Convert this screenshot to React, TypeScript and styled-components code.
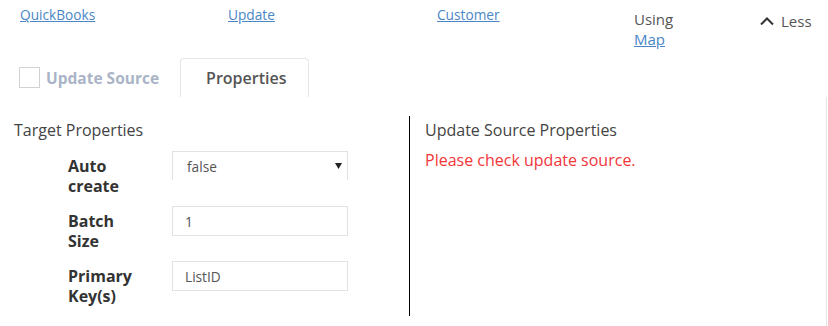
import styled, { createGlobalStyle } from "styled-components";

const GlobalStyle = createGlobalStyle`
  body {
    margin: 0;
    background: #fff;
    font-family: "Open Sans", "Liberation Sans", sans-serif;
  }
`;

const Header = styled.div`
  display: grid;
  grid-template-columns: 208px 209px 197px 126px 1fr;
  height: 58px;
  padding-left: 20px;
  box-sizing: border-box;
`;

const NavLink = styled.a`
  font-size: 13.7px;
  line-height: 18px;
  padding-top: 6px;
  color: #4a86c6;
  text-decoration: underline;
  align-self: start;
  justify-self: start;
`;

const Using = styled.div`
  font-size: 15px;
  line-height: 20px;
  padding-top: 9px;
  color: #555;

  & > a {
    display: block;
    color: #4a86c6;
    text-decoration: underline;
  }
`;

const LessToggle = styled.div`
  display: flex;
  align-items: center;
  gap: 7px;
  height: 20px;
  margin-top: 11px;
  font-size: 15px;
  color: #555;

  & > svg {
    width: 14px;
    height: 8px;
  }
`;

const TabRow = styled.div`
  display: flex;
  align-items: center;
  height: 39px;
  padding-left: 19px;
`;

const CheckBox = styled.span`
  width: 19px;
  height: 19px;
  border: 1px solid #d2d2d2;
  margin-right: 6px;
`;

const SourceLabel = styled.span`
  font-size: 15.5px;
  font-weight: 700;
  color: #aab4c6;
  margin-right: 21px;
`;

const Tab = styled.div`
  align-self: stretch;
  display: flex;
  align-items: center;
  padding: 0 21px 0 25px;
  border: 1px solid #e6e6e6;
  border-bottom: none;
  border-radius: 4px 4px 0 0;
  font-size: 16px;
  font-weight: 600;
  color: #555;
`;

const Panel = styled.div`
  display: grid;
  grid-template-columns: 410px 1fr;
  align-items: start;
  width: 827px;
  padding: 19px 0 10px;
  border-right: 1px solid #e6e6e6;
  box-sizing: border-box;
`;

const Column = styled.div<{ $divider?: boolean }>`
  padding: 4px 0 9px ${(p) => (p.$divider ? "14px" : "15px")};
  border-right: ${(p) => (p.$divider ? "1px solid #000" : "none")};
  height: ${(p) => (p.$divider ? "200px" : "auto")};
  box-sizing: border-box;
`;

const Heading = styled.div`
  font-size: 16px;
  line-height: 20px;
  color: #444;
`;

const ErrorText = styled.div`
  margin-top: 10px;
  font-size: 16px;
  line-height: 20px;
  color: #f2353a;
`;

const Fields = styled.div`
  display: grid;
  row-gap: 9px;
  margin-top: 11px;
  padding-left: 54px;
`;

const FieldRow = styled.div`
  display: grid;
  grid-template-columns: 104px 176px;
  height: 46px;
`;

const FieldLabel = styled.div`
  padding-top: 5px;
  font-size: 16px;
  line-height: 20px;
  font-weight: 700;
  color: #333;
`;

const TextBox = styled.div`
  height: 30px;
  box-sizing: border-box;
  border: 1px solid #e2e2e2;
  padding-left: 12px;
  display: flex;
  align-items: center;
  font-size: 13.7px;
  color: #555;
`;

const SelectBox = styled(TextBox)`
  height: 29px;
  border-bottom: none;
  padding: 0 5px 0 14px;
  justify-content: space-between;

  & > svg {
    width: 7px;
    height: 6px;
  }
`;

const fields = [
  { label: ["Auto", "create"], value: "false", select: true },
  { label: ["Batch", "Size"], value: "1" },
  { label: ["Primary", "Key(s)"], value: "ListID" },
];

export default function App() {
  return (
    <>
      <GlobalStyle />
      <Header>
        <NavLink href="#">QuickBooks</NavLink>
        <NavLink href="#">Update</NavLink>
        <NavLink href="#">Customer</NavLink>
        <Using>
          Using
          <a href="#">Map</a>
        </Using>
        <LessToggle>
          <svg viewBox="0 0 14 8" fill="none" stroke="#333" strokeWidth="2">
            <path d="M1 7.5L7 1.5L13 7.5" />
          </svg>
          Less
        </LessToggle>
      </Header>
      <TabRow>
        <CheckBox />
        <SourceLabel>Update Source</SourceLabel>
        <Tab>Properties</Tab>
      </TabRow>
      <Panel>
        <Column $divider>
          <Heading>Target Properties</Heading>
          <Fields>
            {fields.map((f) => (
              <FieldRow key={f.value}>
                <FieldLabel>
                  {f.label[0]}
                  <br />
                  {f.label[1]}
                </FieldLabel>
                {f.select ? (
                  <SelectBox>
                    <span>{f.value}</span>
                    <svg viewBox="0 0 7 6">
                      <path d="M0 0H7L3.5 6Z" fill="#222" />
                    </svg>
                  </SelectBox>
                ) : (
                  <TextBox>{f.value}</TextBox>
                )}
              </FieldRow>
            ))}
          </Fields>
        </Column>
        <Column>
          <Heading>Update Source Properties</Heading>
          <ErrorText>Please check update source.</ErrorText>
        </Column>
      </Panel>
    </>
  );
}
